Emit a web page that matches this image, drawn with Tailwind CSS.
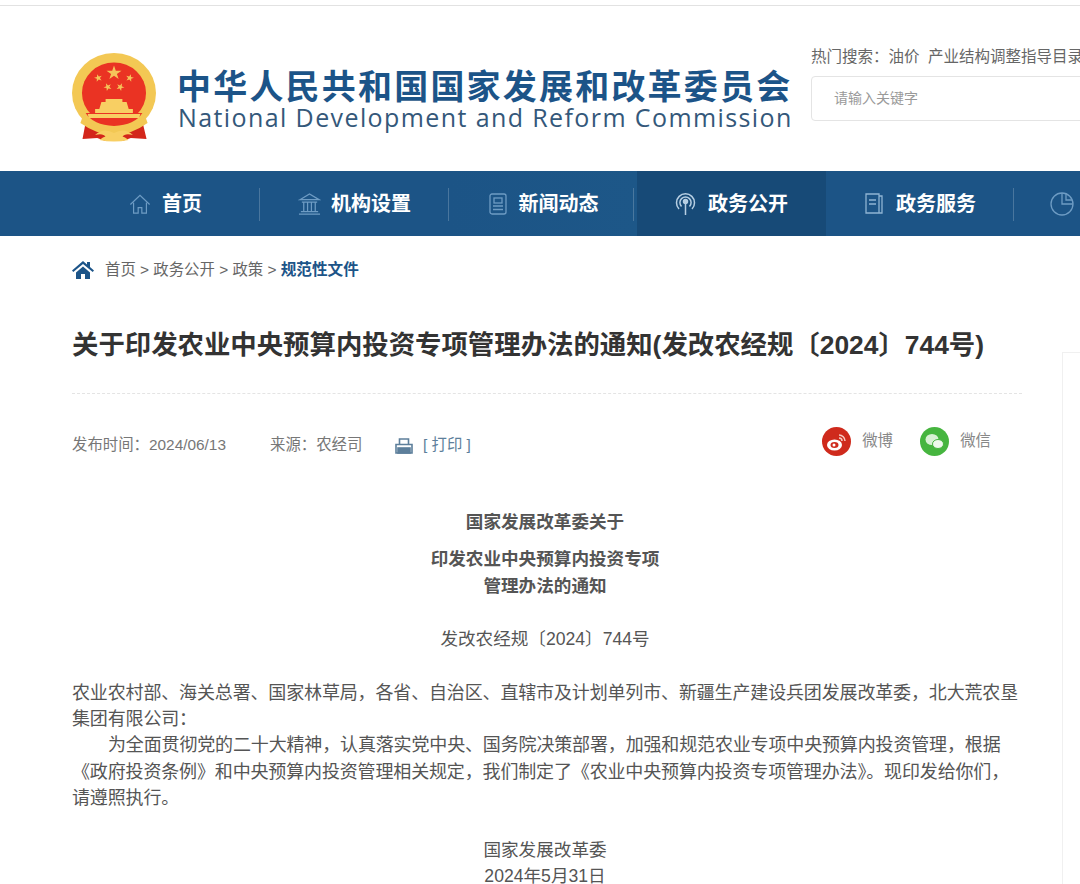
<!DOCTYPE html>
<html lang="zh-CN">
<head>
  <meta charset="UTF-8" />
  <title>国家发展和改革委员会</title>
  <script src="https://cdn.jsdelivr.net/npm/@tailwindcss/browser@4"></script>
</head>
<body class="bg-white h-[884px] w-[1080px] overflow-hidden font-['Liberation_Sans','Noto_Sans_CJK_SC',sans-serif] text-[#555]">

  <!-- Header -->
  <div class="h-[6px] border-b border-[#e2e2e2]"></div>
  <header class="h-[165px] flex pl-[72px]">
    <svg class="w-[84px] h-[90px] mt-[47px] shrink-0" viewBox="0 0 80 90" preserveAspectRatio="none">
      <defs><path id="star" d="M0 -10 L2.300 -3.100 L9.500 -3.100 L3.700 1.200 L5.900 8.100 L0 3.800 L-5.900 8.100 L-3.700 1.200 L-9.500 -3.100 L-2.300 -3.100 Z"/></defs>
      <path d="M14 64 L10 86 L24 85 L32 88 L48 88 L56 85 L71 86 L66 64 Z" fill="#d3261b"/>
      <circle cx="40" cy="40" r="40" fill="#f3c854"/>
      <circle cx="40" cy="40" r="30.500" fill="#ea3323"/>
      <use href="#star" transform="translate(40 20) scale(.75)" fill="#f5c45a"/>
      <use href="#star" transform="translate(25 25) scale(.4) rotate(-15)" fill="#f5c45a"/>
      <use href="#star" transform="translate(55 25) scale(.4) rotate(15)" fill="#f5c45a"/>
      <use href="#star" transform="translate(34 34) scale(.4) rotate(-25)" fill="#f5c45a"/>
      <use href="#star" transform="translate(46 34) scale(.4) rotate(25)" fill="#f5c45a"/>
      <path d="M32 46 H48 V49 H52 L54 56 H58 V62 H22 V56 H26 L28 49 H32 Z" fill="#f8cf63"/>
      <path d="M13 60 H67 Q60 72 40 73 Q20 72 13 60 Z" fill="#ea3323"/>
      <path d="M15 61 H65 L64 65 H16 Z" fill="#f8cf63"/>
      <path d="M10 64 Q24 78 40 78 Q56 78 70 64 L72 70 Q56 82 40 82 Q24 82 8 70 Z" fill="#f3c854"/>
      <path d="M22 82 Q30 74 40 80 Q50 74 58 82 Q50 80 48 84 Q40 80 32 84 Q30 80 22 82 Z M26 87 Q40 76 54 87 Q40 90 26 87 Z" fill="#f8cf63"/>
    </svg>
    <div class="ml-[21px] mt-[64px] w-[620px] shrink-0">
      <div class="text-[34px] leading-[35px] font-bold tracking-[2.200px] text-[#1c5488] whitespace-nowrap">中华人民共和国国家发展和改革委员会</div>
      <div class="text-[25px] leading-[24px] font-['Open_Sans',sans-serif] tracking-[1.400px] text-[#34587a] whitespace-nowrap ml-[1px]">National Development and Reform Commission</div>
    </div>
    <div class="ml-[14px] mt-[39px] w-[300px] shrink-0">
      <div class="text-[15.500px] leading-[24px] text-[#666] whitespace-nowrap">热门搜索：油价&nbsp;&nbsp;产业结构调整指导目录</div>
      <div class="mt-[7px] h-[45px] border border-[#e4e4e4] rounded-[4px] pl-[22px] flex items-center text-[14px] text-[#9a9a9a]">请输入关键字</div>
    </div>
  </header>

  <!-- Nav -->
  <nav class="h-[65px] bg-[#1c5486] flex pl-[71px] text-white font-bold text-[20px] whitespace-nowrap">
    <a class="w-[189px] shrink-0 flex items-center justify-center gap-[11px] relative after:absolute after:right-0 after:top-[17px] after:h-[33px] after:w-px after:bg-white/20">
      <svg class="w-[22px] h-[22px]" viewBox="0 0 24 24" fill="none" stroke="#6e9cc4" stroke-width="1.300"><path d="M1.500 12.500 12 2.500l10.500 10M5 10.500V22h5v-6h4v6h5V10.500"/></svg>
      首页
    </a>
    <a class="w-[189px] shrink-0 flex items-center justify-center gap-[10px] relative after:absolute after:right-0 after:top-[17px] after:h-[33px] after:w-px after:bg-white/20">
      <svg class="w-[23px] h-[23px]" viewBox="0 0 24 24" fill="none" stroke="#6e9cc4" stroke-width="1.300"><path d="M2 8 12 2l10 6zM4 10.500h16M6 11v9M10 11v9M14 11v9M18 11v9M3 20.500h18M1 23h22"/></svg>
      机构设置
    </a>
    <a class="w-[188px] shrink-0 flex items-center justify-center gap-[11px] bg-gradient-to-r from-[#1c5486] to-[#1d5788] relative after:absolute after:right-[3px] after:top-[17px] after:h-[33px] after:w-px after:bg-white/20">
      <svg class="w-[20px] h-[22px]" viewBox="0 0 20 22" fill="none" stroke="#6e9cc4" stroke-width="1.300"><rect x="2" y="1" width="16" height="20" rx="2"/><rect x="6" y="5" width="8" height="5"/><path d="M5 13h10M5 16.500h10"/></svg>
      新闻动态
    </a>
    <a class="w-[189px] shrink-0 flex items-center justify-center gap-[12px] bg-[#174a77]">
      <svg class="w-[21px] h-[23px]" viewBox="0 0 21 23" fill="none" stroke="#b7cfe3" stroke-width="1.500"><path d="M4 17a9 9 0 1 1 13 0M6.500 14.500a5.600 5.600 0 1 1 8 0M10.500 11v12" /><circle cx="10.500" cy="9.500" r="2" fill="#b7cfe3"/></svg>
      政务公开
    </a>
    <a class="w-[188px] shrink-0 flex items-center justify-center gap-[12px] relative after:absolute after:right-0 after:top-[17px] after:h-[33px] after:w-px after:bg-white/20">
      <svg class="w-[20px] h-[21px]" viewBox="0 0 20 21" fill="none" stroke="#8fb4d3" stroke-width="1.300"><path d="M2 1h13v19H2zM15 3h3v17h-3M5 7h7M5 11h7"/></svg>
      政务服务
    </a>
    <a class="ml-[36px] flex items-center">
      <svg class="w-[24px] h-[24px] shrink-0" viewBox="0 0 24 24" fill="none" stroke="#6e9cc4" stroke-width="1.300"><circle cx="12" cy="12" r="11"/><path d="M12 1v11h11M16 1.800V8h6"/></svg>
    </a>
  </nav>

  <div class="flex">
    <main class="w-[1062px] shrink-0 pl-[72px] pr-[44px]">
      <!-- Breadcrumb -->
      <div class="h-[67px] flex items-center text-[15.400px] text-[#666] whitespace-nowrap">
        <svg class="w-[22px] h-[18px] mr-[11px]" viewBox="0 0 22 18" fill="#1c5488"><path d="M11 0 0 9.500l1.300 1.500L11 3l9.700 8 1.300-1.500-4-3.400V1h-3v2.600zM4 11.500 11 5.500l7 6V18h-5v-5H9v5H4z"/></svg>
        首页 &gt; 政务公开 &gt; 政策 &gt;&nbsp;<span class="font-bold text-[15.600px] text-[#1c5488]">规范性文件</span>
      </div>

      <h1 class="mt-[25px] text-[26.400px] leading-[34px] font-bold text-[#333] whitespace-nowrap">关于印发农业中央预算内投资专项管理办法的通知(发改农经规〔2024〕744号)</h1>

      <div class="mt-[31px] w-[950px] border-t border-dashed border-[#e4e4e4]"></div>

      <!-- Meta row -->
      <div class="mt-[31px] h-[40px] flex items-center text-[15.400px] text-[#777] whitespace-nowrap">
        <span class="w-[198px]">发布时间：2024/06/13</span>
        <span class="w-[125px]">来源：农经司</span>
        <svg class="w-[18px] h-[17px] mr-[10px] mt-[3px]" viewBox="0 0 18 17" fill="none" stroke="#5d7f9b" stroke-width="1.600"><path d="M4.500 6V1h9v5M1 15V6.500h16V15z"/><rect x="3" y="10" width="12" height="5" fill="#5d7f9b"/></svg>
        <span class="text-[#5d7f9b]">[ 打印 ]</span>
        <span class="ml-auto mb-[8px] flex items-center pr-[27px] text-[#888]">
          <svg class="w-[29px] h-[29px] mr-[11px]" viewBox="0 0 29 29"><circle cx="14.500" cy="14.500" r="14.500" fill="#cf2a1c"/><ellipse cx="12.500" cy="18" rx="7.500" ry="5.500" fill="#fff"/><ellipse cx="12.500" cy="18" rx="4" ry="3" fill="#cf2a1c"/><circle cx="12" cy="18" r="1.500" fill="#fff"/><path d="M17 8a6 6 0 0 1 6 6M17 11a3 3 0 0 1 3 3" fill="none" stroke="#f5c9c0" stroke-width="1.500"/></svg>
          <span class="w-[58px]">微博</span>
          <svg class="w-[29px] h-[29px] mr-[11px]" viewBox="0 0 29 29"><circle cx="14.500" cy="14.500" r="14.500" fill="#46b53f"/><ellipse cx="12" cy="12.500" rx="6.500" ry="5.500" fill="#d8f1d4"/><ellipse cx="18" cy="17" rx="5.500" ry="4.500" fill="#eef9ec" stroke="#46b53f"/></svg>
          <span>微信</span>
        </span>
      </div>

      <!-- Article -->
      <article class="mt-[44px] text-[17.600px] text-[#555]">
        <div class="text-center font-bold leading-[26px]">国家发展改革委关于</div>
        <div class="mt-[11px] text-center font-bold leading-[27px]">印发农业中央预算内投资专项<br>管理办法的通知</div>
        <div class="mt-[26px] text-center leading-[26px]">发改农经规〔2024〕744号</div>
        <div class="mt-[28px] w-[950px] text-[18px] tracking-[-0.150px] leading-[26.200px]">
          <p>农业农村部、海关总署、国家林草局，各省、自治区、直辖市及计划单列市、新疆生产建设兵团发展改革委，北大荒农垦集团有限公司：</p>
          <p class="indent-[36px]">为全面贯彻党的二十大精神，认真落实党中央、国务院决策部署，加强和规范农业专项中央预算内投资管理，根据《政府投资条例》和中央预算内投资管理相关规定，我们制定了《农业中央预算内投资专项管理办法》。现印发给你们，请遵照执行。</p>
        </div>
        <div class="mt-[26px] text-center leading-[26px]">国家发展改革委</div>
        <div class="text-center leading-[26px]">2024年5月31日</div>
      </article>
    </main>
    <aside class="mt-[116px] flex-1 border-l border-t border-[#f0f0f0]"></aside>
  </div>
</body>
</html>
